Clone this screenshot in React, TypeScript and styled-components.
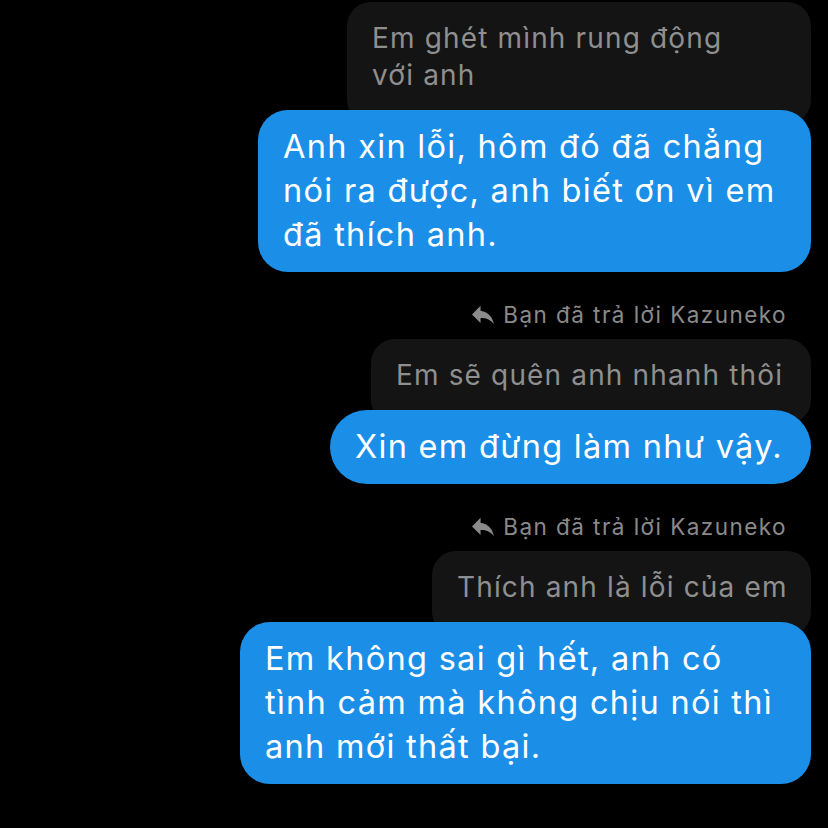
import React from "react";
import styled, { createGlobalStyle } from "styled-components";

const GlobalStyle = createGlobalStyle`
  html, body {
    margin: 0;
    padding: 0;
    background: #000;
  }
  body {
    font-family: "Inter", "Noto Sans", "Liberation Sans", sans-serif;
    -webkit-font-smoothing: antialiased;
  }
`;

const Thread = styled.div`
  width: 828px;
  height: 828px;
  overflow: hidden;
  background: #000;
  display: flex;
  flex-direction: column;
  align-items: flex-end;
  padding: 2px 17px 0 0;
  box-sizing: border-box;
`;

const Exchange = styled.div`
  display: flex;
  flex-direction: column;
  align-items: flex-end;
  margin-bottom: 29px;
`;

const ReplyNote = styled.div`
  display: flex;
  align-items: center;
  gap: 9px;
  height: 28px;
  margin: 0 24px 10px 0;
  color: #8a8a8a;
  font-size: 22.5px;
  line-height: 28px;
  letter-spacing: 1.45px;
  white-space: pre;
`;

const ReplyIcon = styled.svg`
  width: 22px;
  height: 20px;
  fill: #8a8a8a;
  flex-shrink: 0;
`;

const Quoted = styled.div<{ $w: number }>`
  width: ${(p) => p.$w}px;
  box-sizing: border-box;
  background: #141414;
  color: #8f8f8f;
  border-radius: 24px;
  padding: 18px 25px 30px;
  margin-bottom: -14px;
  font-size: 28px;
  line-height: 37px;
  letter-spacing: 1.15px;
  white-space: pre;
`;

const Bubble = styled.div<{ $w: number; $pill?: boolean }>`
  position: relative;
  z-index: 1;
  width: ${(p) => p.$w}px;
  box-sizing: border-box;
  background: #1b8fe8;
  color: #fff;
  border-radius: ${(p) => (p.$pill ? "37px" : "30px")};
  padding: 15px 25px;
  font-size: 32.5px;
  line-height: 44px;
  letter-spacing: 1.3px;
  white-space: pre;
`;

const Reply = () => (
  <ReplyNote>
    <ReplyIcon viewBox="3 4.5 18 16">
      <path d="M10 9V5l-7 7 7 7v-4.1c5 0 8.5 1.6 11 5.1-1-5-4-10-11-11z" />
    </ReplyIcon>
    Bạn đã trả lời Kazuneko
  </ReplyNote>
);

export default function App() {
  return (
    <>
      <GlobalStyle />
      <Thread>
        <Exchange>
          <Quoted $w={464}>{"Em ghét mình rung động\nvới anh"}</Quoted>
          <Bubble $w={553}>
            {"Anh xin lỗi, hôm đó đã chẳng\nnói ra được, anh biết ơn vì em\nđã thích anh."}
          </Bubble>
        </Exchange>
        <Exchange>
          <Reply />
          <Quoted $w={440}>Em sẽ quên anh nhanh thôi</Quoted>
          <Bubble $w={481} $pill>
            Xin em đừng làm như vậy.
          </Bubble>
        </Exchange>
        <Exchange>
          <Reply />
          <Quoted $w={379}>Thích anh là lỗi của em</Quoted>
          <Bubble $w={571}>
            {"Em không sai gì hết, anh có\ntình cảm mà không chịu nói thì\nanh mới thất bại."}
          </Bubble>
        </Exchange>
      </Thread>
    </>
  );
}
